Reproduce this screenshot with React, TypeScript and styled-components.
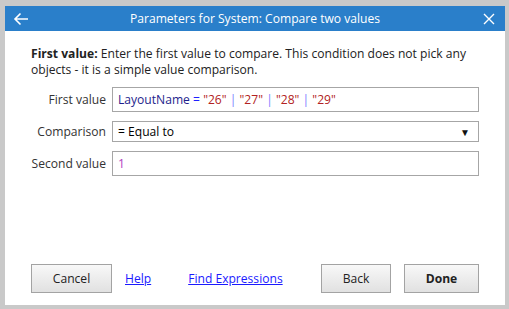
import React from 'react'
import styled, { createGlobalStyle } from 'styled-components'

const GlobalStyle = createGlobalStyle`
    html, body {
        margin: 0;
        padding: 0;
        background: #c9c9c9;
        font-family: "Open Sans", "Noto Sans", sans-serif;
    }
`
const Frame = styled.div`
    width: 509px;
    height: 309px;
    padding: 6px 4px 4px 5px;
    box-sizing: border-box;
`
const Dialog = styled.div`
    width: 500px;
    height: 299px;
    background: #ffffff;
    display: flex;
    flex-direction: column;
`
const TitleBar = styled.div`
    height: 25px;
    background: #2a7fca;
    color: #ffffff;
    display: flex;
    align-items: center;
    justify-content: space-between;
    padding: 0 8px 0 8px;
    font-size: 12.1px;
`
const TitleText = styled.span`
    flex: 1;
    text-align: center;
`
const IconButton = styled.span`
    width: 16px;
    height: 16px;
    display: flex;
    align-items: center;
    justify-content: center;
`
const Body = styled.div`
    flex: 1;
    display: flex;
    flex-direction: column;
    padding: 15px 26px 12px 26px;
`
const Description = styled.p`
    margin: 0 0 9px 0;
    font-size: 12.1px;
    line-height: 16px;
    color: #222;
`
const Row = styled.div`
    display: flex;
    align-items: center;
    gap: 6px;
    margin-bottom: 9px;
`
const Label = styled.label`
    width: 75px;
    text-align: right;
    font-size: 12.1px;
    color: #333;
    white-space: nowrap;
`
const Field = styled.div<{ $h: number }>`
    flex: 1;
    height: ${p => p.$h}px;
    box-sizing: border-box;
    border: 1px solid #a6a6a6;
    display: flex;
    align-items: center;
    padding: 0 5px;
    font-size: 12.1px;
    white-space: pre;
`
const Arrow = styled.span`
    margin-left: auto;
    margin-right: 3px;
    font-size: 10px;
    color: #111;
`
const Tok = styled.span<{ $c: string }>`
    color: ${p => p.$c};
`
const Spacer = styled.div`
    flex: 1;
`
const Footer = styled.div`
    display: flex;
    align-items: center;
`
const Button = styled.button<{ $w: number; $bold?: boolean; $ml?: number }>`
    width: ${p => p.$w}px;
    height: 29px;
    margin-left: ${p => p.$ml ?? 0}px;
    border: 1px solid #a3a3a3;
    background: linear-gradient(#f8f8f8, #e1e1e1);
    font-family: inherit;
    font-size: 12.1px;
    font-weight: ${p => (p.$bold ? 700 : 400)};
    color: #222;
    padding: 0;
`
const Link = styled.a<{ $ml: number }>`
    margin-left: ${p => p.$ml}px;
    color: #1a1aff;
    text-decoration: underline;
    font-size: 12.1px;
`

export default function App() {
    return (
        <>
            <GlobalStyle />
            <Frame>
                <Dialog>
                    <TitleBar>
                        <IconButton>
                            <svg width="16" height="14" viewBox="0 0 16 14" fill="none" stroke="#fff" strokeWidth="1.6">
                                <path d="M15 7H2M7.5 1.5L2 7l5.5 5.5" />
                            </svg>
                        </IconButton>
                        <TitleText>Parameters for System: Compare two values</TitleText>
                        <IconButton>
                            <svg width="12" height="12" viewBox="0 0 12 12" stroke="#fff" strokeWidth="1.4">
                                <path d="M1 1l10 10M11 1L1 11" />
                            </svg>
                        </IconButton>
                    </TitleBar>
                    <Body>
                        <Description>
                            <b>First value:</b> Enter the first value to compare. This condition does not pick any objects - it is a simple value comparison.
                        </Description>
                        <Row>
                            <Label>First value</Label>
                            <Field $h={25}>
                                <Tok $c="#1e1e8c">LayoutName</Tok>
                                <Tok $c="#2020ff"> = </Tok>
                                <Tok $c="#b22222">"26"</Tok>
                                <Tok $c="#7a7aff"> | </Tok>
                                <Tok $c="#b22222">"27"</Tok>
                                <Tok $c="#7a7aff"> | </Tok>
                                <Tok $c="#b22222">"28"</Tok>
                                <Tok $c="#7a7aff"> | </Tok>
                                <Tok $c="#b22222">"29"</Tok>
                            </Field>
                        </Row>
                        <Row>
                            <Label>Comparison</Label>
                            <Field $h={21}>
                                = Equal to
                                <Arrow>▼</Arrow>
                            </Field>
                        </Row>
                        <Row>
                            <Label>Second value</Label>
                            <Field $h={25}>
                                <Tok $c="#b040c0">1</Tok>
                            </Field>
                        </Row>
                        <Spacer />
                        <Footer>
                            <Button $w={81}>Cancel</Button>
                            <Link $ml={13}>Help</Link>
                            <Link $ml={37}>Find Expressions</Link>
                            <Spacer />
                            <Button $w={70}>Back</Button>
                            <Button $w={75} $bold $ml={13}>Done</Button>
                        </Footer>
                    </Body>
                </Dialog>
            </Frame>
        </>
    )
}
